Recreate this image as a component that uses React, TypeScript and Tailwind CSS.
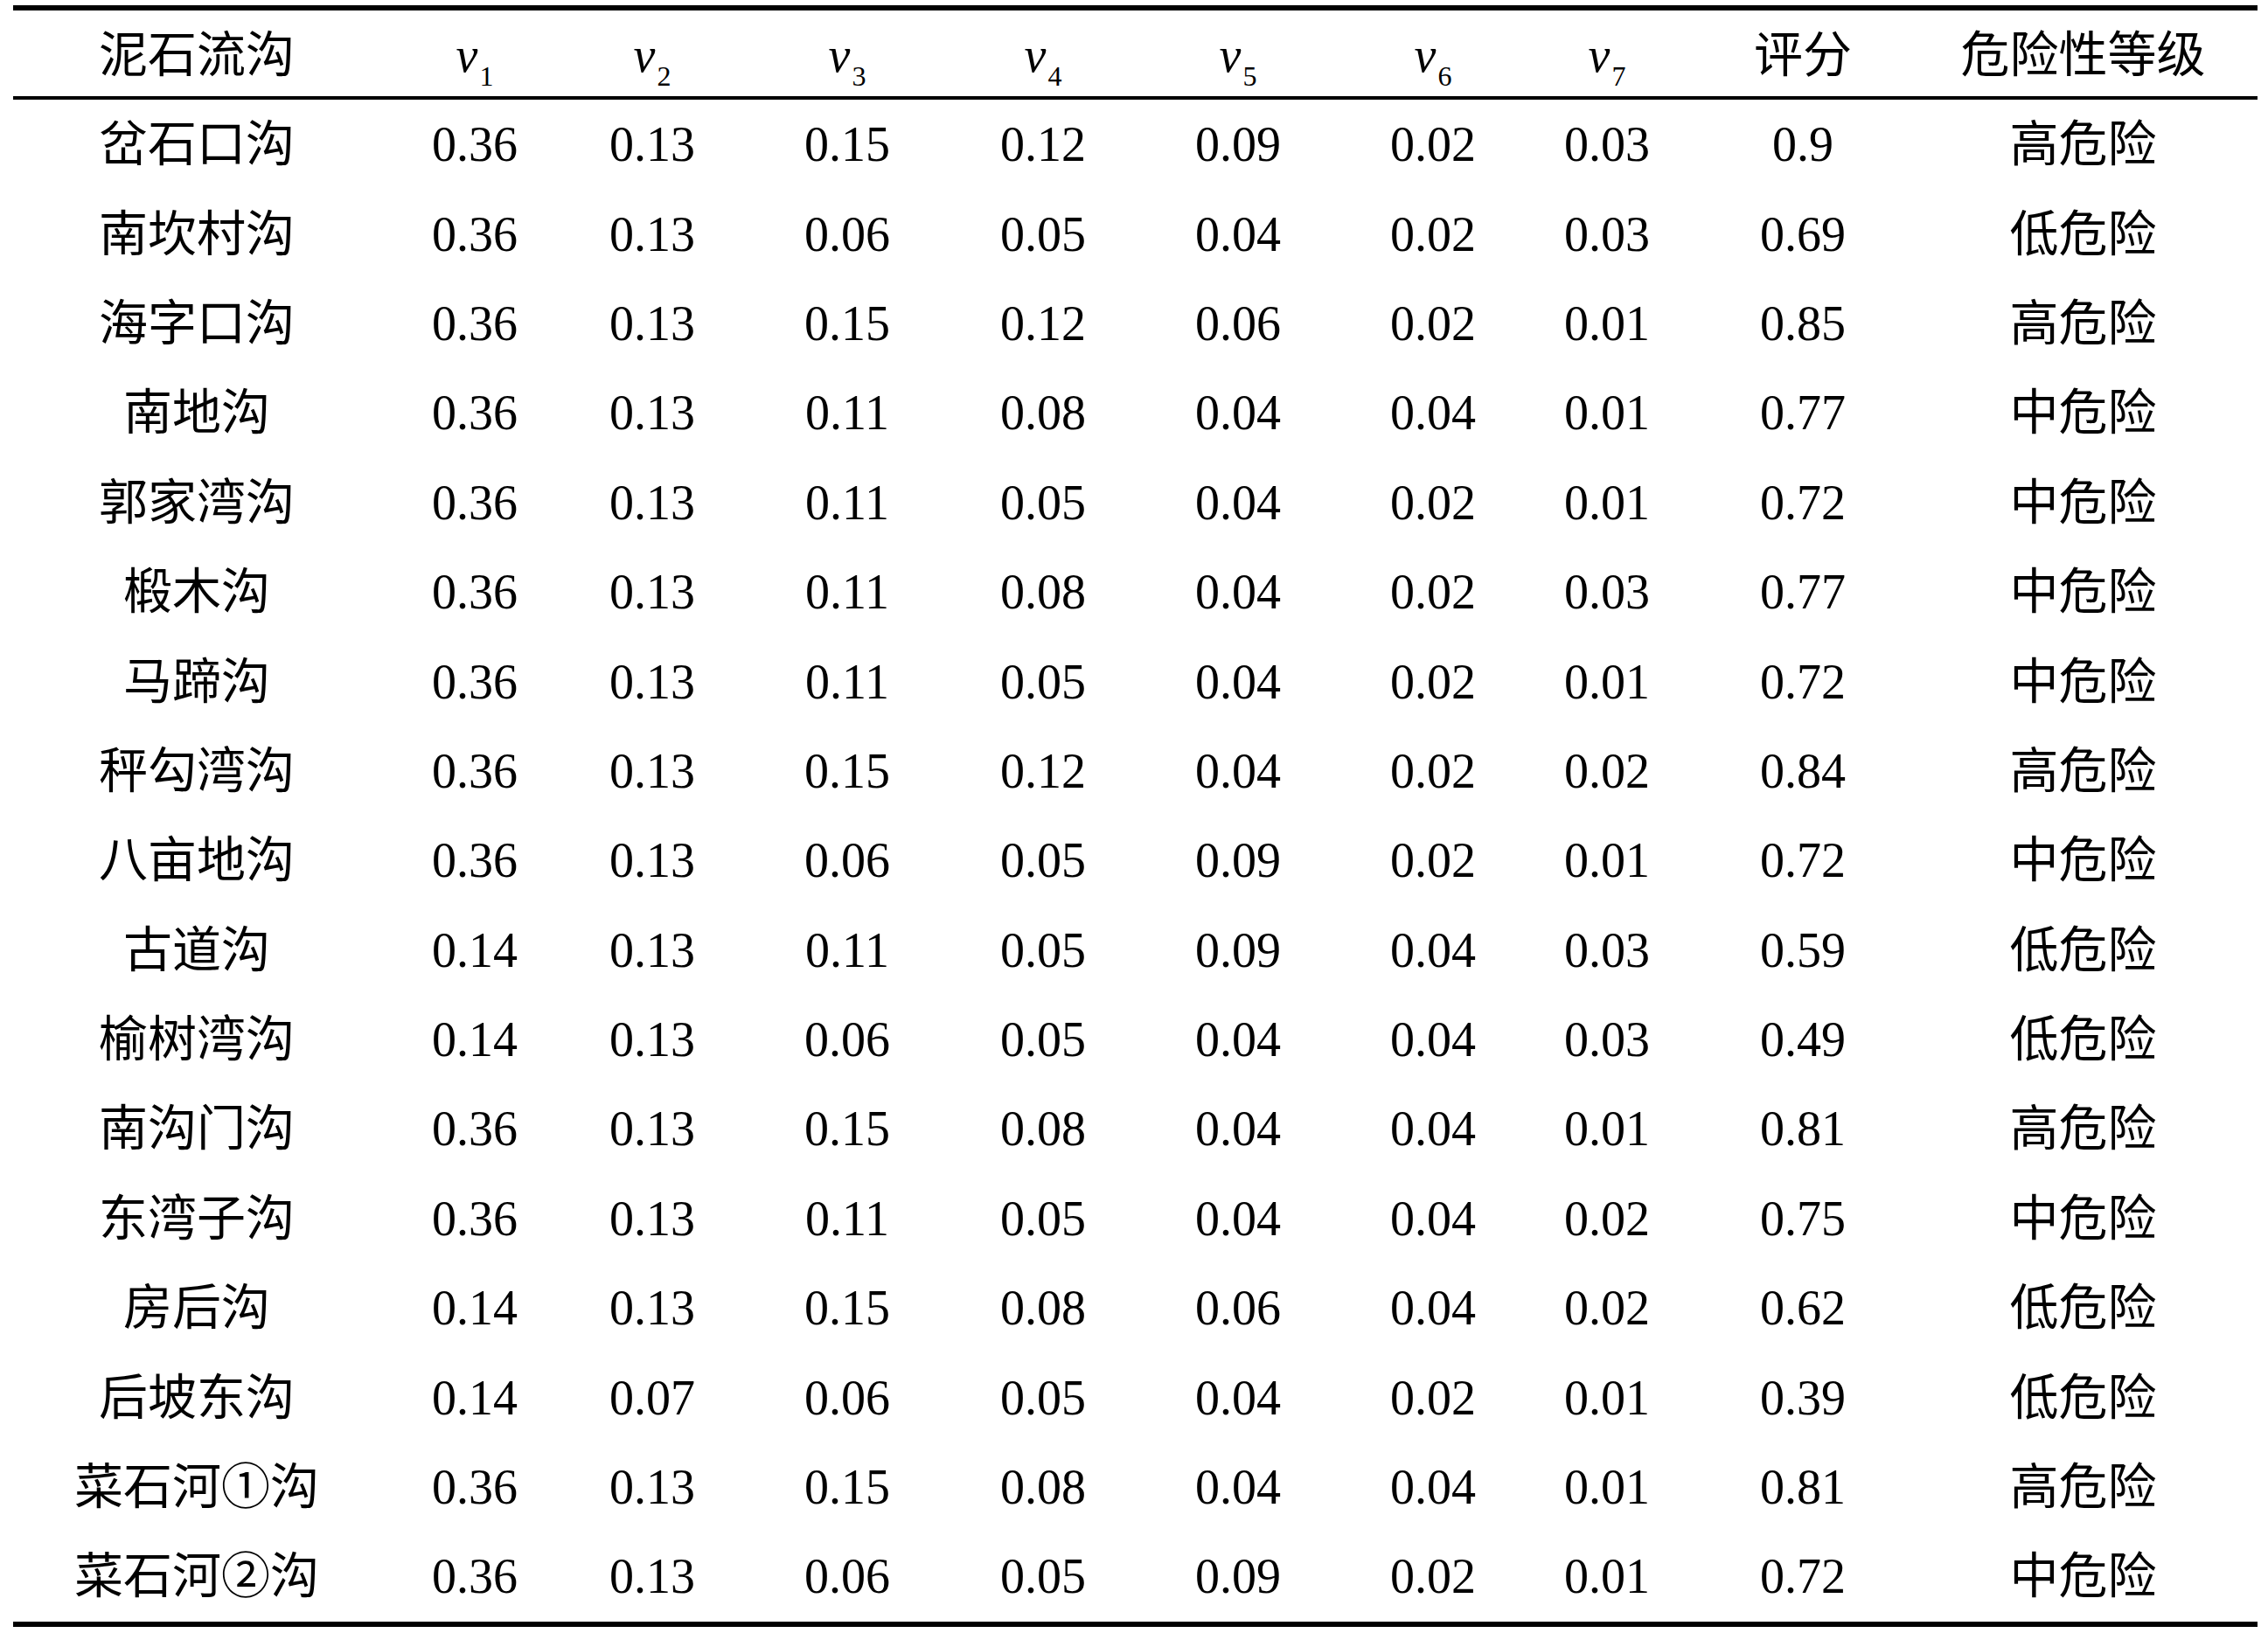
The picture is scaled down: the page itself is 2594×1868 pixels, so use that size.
import React from "react";

const rows: string[][] = [
  ["岔石口沟", "0.36", "0.13", "0.15", "0.12", "0.09", "0.02", "0.03", "0.9", "高危险"],
  ["南坎村沟", "0.36", "0.13", "0.06", "0.05", "0.04", "0.02", "0.03", "0.69", "低危险"],
  ["海字口沟", "0.36", "0.13", "0.15", "0.12", "0.06", "0.02", "0.01", "0.85", "高危险"],
  ["南地沟", "0.36", "0.13", "0.11", "0.08", "0.04", "0.04", "0.01", "0.77", "中危险"],
  ["郭家湾沟", "0.36", "0.13", "0.11", "0.05", "0.04", "0.02", "0.01", "0.72", "中危险"],
  ["椴木沟", "0.36", "0.13", "0.11", "0.08", "0.04", "0.02", "0.03", "0.77", "中危险"],
  ["马蹄沟", "0.36", "0.13", "0.11", "0.05", "0.04", "0.02", "0.01", "0.72", "中危险"],
  ["秤勾湾沟", "0.36", "0.13", "0.15", "0.12", "0.04", "0.02", "0.02", "0.84", "高危险"],
  ["八亩地沟", "0.36", "0.13", "0.06", "0.05", "0.09", "0.02", "0.01", "0.72", "中危险"],
  ["古道沟", "0.14", "0.13", "0.11", "0.05", "0.09", "0.04", "0.03", "0.59", "低危险"],
  ["榆树湾沟", "0.14", "0.13", "0.06", "0.05", "0.04", "0.04", "0.03", "0.49", "低危险"],
  ["南沟门沟", "0.36", "0.13", "0.15", "0.08", "0.04", "0.04", "0.01", "0.81", "高危险"],
  ["东湾子沟", "0.36", "0.13", "0.11", "0.05", "0.04", "0.04", "0.02", "0.75", "中危险"],
  ["房后沟", "0.14", "0.13", "0.15", "0.08", "0.06", "0.04", "0.02", "0.62", "低危险"],
  ["后坡东沟", "0.14", "0.07", "0.06", "0.05", "0.04", "0.02", "0.01", "0.39", "低危险"],
  ["菜石河①沟", "0.36", "0.13", "0.15", "0.08", "0.04", "0.04", "0.01", "0.81", "高危险"],
  ["菜石河②沟", "0.36", "0.13", "0.06", "0.05", "0.09", "0.02", "0.01", "0.72", "中危险"],
];

const grid =
  "grid grid-cols-[420px_216px_190px_256px_192px_254px_192px_206px_242px_399px]";

function V({ n }: { n: number }) {
  return (
    <span className="whitespace-nowrap">
      <span className="italic">v</span>
      <span className="relative top-[16px] ml-[2px] text-[32px] not-italic">{n}</span>
    </span>
  );
}

export default function App() {
  return (
    <div
      className="min-h-[1868px] w-full bg-white pt-[6px] pl-[15px] text-black"
      style={{ fontFamily: '"Liberation Serif", "Noto Sans CJK SC", serif' }}
    >
      <div className="w-[2567px] border-t-[6px] border-b-[6px] border-black">
        <div className={`${grid} h-[102px] border-b-[4px] border-black pt-[4px] text-[56px] leading-none`}>
          <div className="flex items-center justify-center">泥石流沟</div>
          {[1, 2, 3, 4, 5, 6, 7].map((n) => (
            <div key={n} className="flex items-center justify-center">
              <V n={n} />
            </div>
          ))}
          <div className="flex items-center justify-center">评分</div>
          <div className="flex items-center justify-center">危险性等级</div>
        </div>
        {rows.map((r, i) => (
          <div key={i} className={`${grid} h-[102.4px] text-[56px] leading-none`}>
            {r.map((c, j) => (
              <div key={j} className="flex items-center justify-center whitespace-nowrap">
                {c}
              </div>
            ))}
          </div>
        ))}
      </div>
    </div>
  );
}
